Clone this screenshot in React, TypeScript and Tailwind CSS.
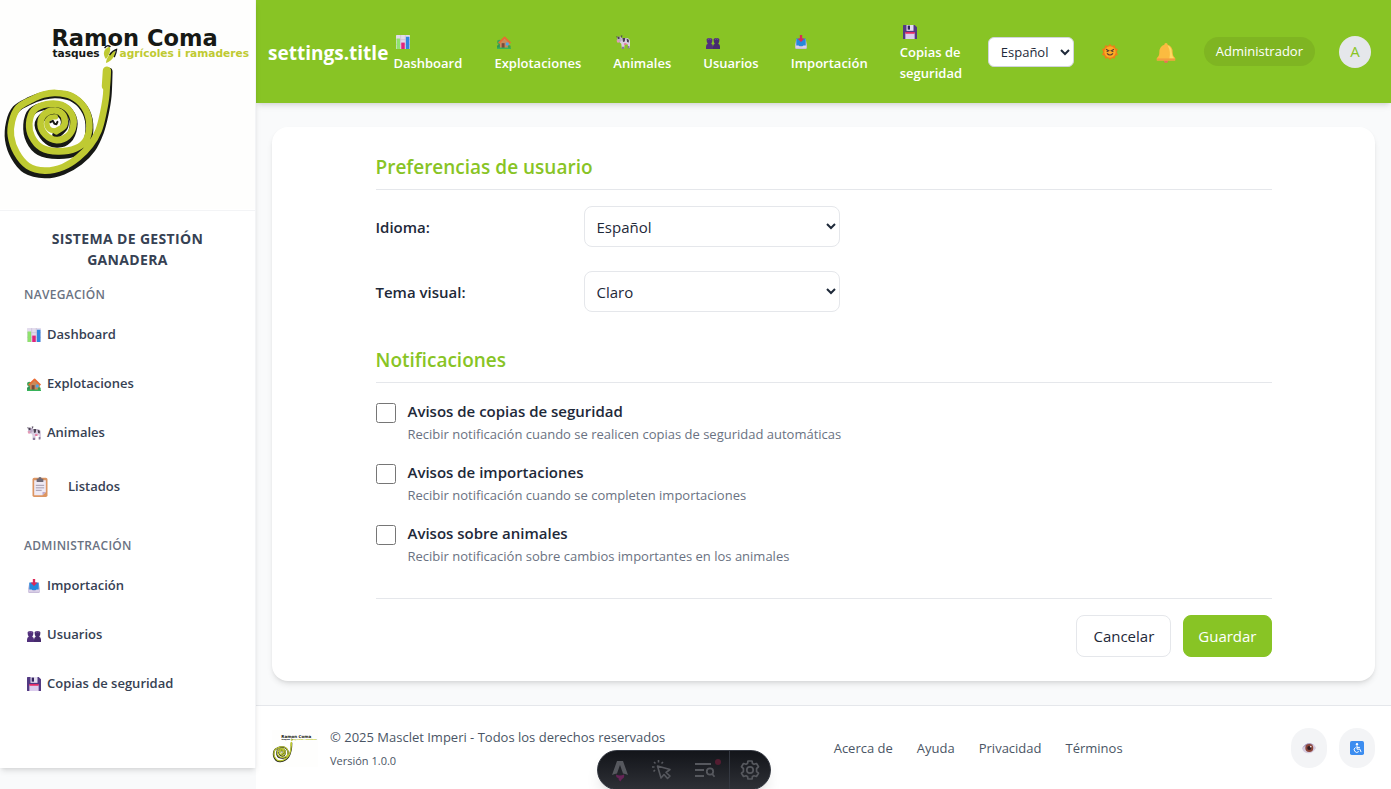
import type { ReactNode } from "react";

type Point = [number, number];

/** Builds a smooth curve through the given points. */
function smooth(points: Point[]): string {
  let d = `M${points[0][0]} ${points[0][1]}`;
  for (let i = 0; i < points.length - 1; i++) {
    const p0 = points[i - 1] ?? points[i];
    const p1 = points[i];
    const p2 = points[i + 1];
    const p3 = points[i + 2] ?? p2;
    d += ` C${p1[0] + (p2[0] - p0[0]) / 6} ${p1[1] + (p2[1] - p0[1]) / 6} ${p2[0] - (p3[0] - p1[0]) / 6} ${p2[1] - (p3[1] - p1[1]) / 6} ${p2[0]} ${p2[1]}`;
  }
  return d;
}

const spiralPoints: Point[] = [
  [323, 212], [320, 285], [311, 340], [297, 393], [272, 437], [235, 475], [190, 503], [135, 514],
  [84, 500], [50, 460], [33, 410], [36, 365], [54, 325], [95, 300], [130, 285], [168, 280],
  [215, 289], [253, 322], [269, 370], [260, 420], [228, 447], [175, 456], [125, 445], [96, 412],
  [88, 372], [102, 332], [140, 314], [185, 316], [215, 342], [221, 378], [204, 410], [170, 422],
  [137, 406], [122, 373], [135, 343], [166, 333], [191, 348], [193, 378], [170, 395],
];
const corePoints: Point[] = [
  [170, 395], [150, 390], [141, 372], [150, 355], [167, 352],
];
const spiral = smooth(spiralPoints);
const core = smooth(corePoints);
// The ink behind the ribbon is heavier on the lower and left sides.
const ink = smooth(
  spiralPoints.map(([x, y], i): Point => [x + (i < 6 ? 4 : x < 130 ? -6 : 0), y + (y > 385 && i > 3 ? 11 : 4)]),
);

function Logo({ className }: { className: string }) {
  return (
    <svg viewBox="0 0 768 630" className={className} role="img" aria-label="Ramon Coma">
      <rect width="768" height="630" fill="#fefefd" />
      <g fill="none" strokeLinecap="round" strokeLinejoin="round">
        <path d={ink} stroke="#171915" strokeWidth="24" />
        <path d={spiral} stroke="#bfca32" strokeWidth="20" />
        <path d="M322 213 L319 260" stroke="#bfca32" strokeWidth="25" />
        <path d={core} stroke="#bfca32" strokeWidth="16" />
        <path d="M152 368 L159 364 L164 373 L170 374 L173 367" stroke="#171915" strokeWidth="6" />
      </g>
      <g fontFamily="DejaVu Sans, sans-serif" fontWeight="700">
        <text x="155" y="138" fontSize="68" fill="#171915">Ramon Coma</text>
        <text x="158" y="172" fontSize="32" fill="#171915">tasques</text>
        <text x="360" y="172" fontSize="32" fill="#bfca32">agrícoles i ramaderes</text>
      </g>
      <path d="M319 178 C308 162 312 147 330 140 C335 150 330 165 319 178Z" fill="#bfca32" />
      <path d="M315 145 Q322 133 333 141" stroke="#171915" strokeWidth="4" fill="none" />
      <path d="M319 190 C320 172 334 158 346 152 C352 160 340 182 319 190Z" fill="#bfca32" />
      <path d="M330 166 Q338 153 351 149 Q350 160 344 172" stroke="#171915" strokeWidth="4" fill="none" />
    </svg>
  );
}

type IconName =
  | "chart" | "house" | "cow" | "tray" | "users" | "floppy"
  | "clipboard" | "sun" | "bell" | "eye" | "access";

const drawings: Record<IconName, ReactNode> = {
  chart: (
    <>
      <rect width="24" height="24" rx="1" fill="#e3dced" />
      <path d="M0 8h24M0 16h24M8 0v24M16 0v24" stroke="#c2b8d3" strokeWidth="1" />
      <rect x="1" y="6" width="6" height="18" fill="#8fe36d" />
      <rect x="9" y="13" width="6" height="11" fill="#e0247c" />
      <rect x="17" y="3" width="6" height="21" fill="#2f86e0" />
    </>
  ),
  house: (
    <>
      <circle cx="4" cy="12" r="4" fill="#3fa65a" />
      <path d="M0 24v-5q4-7 8 0v5z" fill="#2f9556" />
      <path d="M5 12 13 5l9 8v10H5z" fill="#c98a5b" />
      <path d="m3 14 10-10 10 10" stroke="#ea6a32" strokeWidth="3" fill="none" strokeLinejoin="round" />
      <path d="M8 14h5v9H8z" fill="#7a4a3c" />
      <path d="M15 13h5v5h-5z" fill="#4da6e6" />
      <path d="M0 21.500h24V24H0z" fill="#37b35a" />
      <circle cx="21" cy="20" r="2.500" fill="#37a34f" />
    </>
  ),
  cow: (
    <>
      <path d="M7 5h12q5 1 5 6v11h-3l-1-6h-5l-1 7h-4L9 15 6 12z" fill="#d9cfe2" />
      <path d="M2 3h7l1 6-4 4-4-1z" fill="#b9aac6" />
      <path d="M0 2l3 1-1 2zM8 1l3 0-1 4z" fill="#4a4052" />
      <path d="M11 5h5l-1 6-3 1zM18 6l4 2v5l-3-1zM3 3h3v4H3z" fill="#4a4052" />
      <path d="M1 9h5l-1 4H2z" fill="#e59ab5" />
      <path d="M14 14h4v3h-4z" fill="#e8719a" />
      <path d="M10 20h4v4h-4zM20 19h3v4h-3z" fill="#8a7b9b" />
    </>
  ),
  tray: (
    <>
      <path d="M4 7h16l2 9v6q0 2-2 2H4q-2 0-2-2v-6z" fill="#c8bcda" />
      <path d="M4 6h16v13H4z" fill="#2588dc" />
      <path d="M3 18h5q1 3 4 3t4-3h5v4H3z" fill="#ddd3ea" />
      <path d="M10 0h4v6h4l-6 6-6-6h4z" fill="#dd2856" />
    </>
  ),
  users: (
    <g fill="#51307c">
      <path d="M0 24v-4q0-4 3-5-2-3-2-7 0-3 5-3t5 3q0 4-2 7 3 1 3 5v4z" />
      <path d="M12 24v-4q0-4 3-5-2-3-2-7 0-3 5-3t5 3q0 4-2 7 3 1 3 5v4z" fill="#462b6d" />
      <path d="M3 8q3-3 6 0M15 8q3-3 6 0" stroke="#7b559e" strokeWidth="1.500" fill="none" />
    </g>
  ),
  floppy: (
    <>
      <path d="M1 0h19l4 4v20H1q-1 0-1-1V1q0-1 1-1z" fill="#533a83" />
      <path d="M6 0h12v10H6z" fill="#e5dff0" />
      <path d="M8 1h4v7H8z" fill="#32235f" />
      <path d="M4 13h16v11H4z" fill="#dccdee" />
      <path d="M4 12h16v3H4z" fill="#e52c65" />
    </>
  ),
  clipboard: (
    <>
      <rect x="3" y="1" width="18" height="23" rx="2" fill="#dc9562" />
      <path d="M5 4h14v14l-4 4H5z" fill="#eee9f4" />
      <path d="M19 18h-4v4z" fill="#bdaacd" />
      <path d="M8 2h2q0-2 2-2t2 2h2v4H8z" fill="#6f6975" />
      <path d="M7 10h10M7 13h10M7 16h7" stroke="#a49cae" strokeWidth="1.200" />
    </>
  ),
  sun: (
    <>
      <path
        d="m12 0 3 3 4-1 1 4 4 2-2 4 2 4-4 2-1 4-4-1-3 3-3-3-4 1-1-4-4-2 2-4-2-4 4-2 1-4 4 1z"
        fill="#ef7d19"
      />
      <circle cx="12" cy="12" r="8.500" fill="#fbab24" />
      <path d="m6 8 4 2-3 1.500M18 8l-4 2 3 1.500M7.500 14q4.500 5 9 0" stroke="#5b4030" strokeWidth="1.700" fill="none" />
    </>
  ),
  bell: (
    <>
      <circle cx="12" cy="21.500" r="2.500" fill="#e8705a" />
      <path d="M12 0q2 0 2 2 6 2 6 9 0 5 3 7v3H1v-3q3-2 3-7 0-7 6-9 0-2 2-2z" fill="#fbbb40" />
      <path d="M14 3q5 2 5 9 0 4 3 7h-6q2-9-2-16z" fill="#ffda63" />
      <path d="M1 18.500h22V21H1z" fill="#f39b3f" />
    </>
  ),
  eye: (
    <>
      <path d="M0 13Q6 3 14 4q7 1 10 8-5 9-13 9T0 13z" fill="#d6cbdf" />
      <path d="M0 13Q6 3 14 4q4 1 6 3Q8 5 0 13z" fill="#a291b4" />
      <circle cx="12.500" cy="12" r="6.800" fill="#8b4438" />
      <circle cx="12.500" cy="12" r="3.500" fill="#301c22" />
      <circle cx="15" cy="9.500" r="1.500" fill="#e8d9dc" />
    </>
  ),
  access: (
    <>
      <rect width="24" height="24" rx="3" fill="#3c8df0" />
      <circle cx="12" cy="5.500" r="2" fill="#fff" />
      <path d="M12 8v6h5l2 5M12 11h5M9.500 11a4.500 4.500 0 1 0 5.500 7" stroke="#fff" strokeWidth="1.700" fill="none" />
    </>
  ),
};

function Icon({ name, className = "size-3.5" }: { name: IconName; className?: string }) {
  return (
    <svg viewBox="0 0 24 24" className={`shrink-0 ${className}`} aria-hidden="true">
      {drawings[name]}
    </svg>
  );
}

const topLinks: { icon: IconName; label: string }[] = [
  { icon: "chart", label: "Dashboard" },
  { icon: "house", label: "Explotaciones" },
  { icon: "cow", label: "Animales" },
  { icon: "users", label: "Usuarios" },
  { icon: "tray", label: "Importación" },
  { icon: "floppy", label: "Copias de seguridad" },
];

function SideLink({ icon, label }: { icon: IconName; label: string }) {
  return (
    <li>
      <a href="#" className="flex items-center gap-1.5 px-[27px] py-2.5 text-[13px] leading-[21px] font-semibold text-gray-700">
        <Icon name={icon} />
        {label}
      </a>
    </li>
  );
}

function SideHeading({ children }: { children: ReactNode }) {
  return (
    <h3 className="px-6 text-[12px] leading-[18px] font-semibold tracking-wide text-gray-500 uppercase">{children}</h3>
  );
}

function Sidebar() {
  return (
    <aside className="relative z-20 w-64 shrink-0 self-start border-r border-gray-100 bg-white pb-16 shadow-md">
      <div className="border-b border-gray-100 pb-px">
        <Logo className="block w-full" />
      </div>
      <h2 className="px-10 pt-[17px] text-center text-[14px] leading-[21px] font-bold tracking-wide text-gray-700 uppercase">
        Sistema de Gestión Ganadera
      </h2>
      <nav className="pt-4">
        <SideHeading>Navegación</SideHeading>
        <ul className="flex flex-col gap-2 pt-2.5">
          <SideLink icon="chart" label="Dashboard" />
          <SideLink icon="house" label="Explotaciones" />
          <SideLink icon="cow" label="Animales" />
          <li>
            <a href="#" className="flex items-center gap-[18px] px-[30px] py-[15px] text-[13px] leading-[21px] font-semibold text-gray-700">
              <Icon name="clipboard" className="size-5" />
              Listados
            </a>
          </li>
        </ul>
        <div className="pt-[25px]">
          <SideHeading>Administración</SideHeading>
        </div>
        <ul className="flex flex-col gap-2 pt-2.5">
          <SideLink icon="tray" label="Importación" />
          <SideLink icon="users" label="Usuarios" />
          <SideLink icon="floppy" label="Copias de seguridad" />
        </ul>
      </nav>
    </aside>
  );
}

function Header() {
  return (
    <header className="relative z-10 flex items-center bg-[#88c425] pr-5 pl-3 text-white shadow-md">
      <h1 className="mr-[5px] shrink-0 pt-0.5 text-[19px] leading-7 font-bold">settings.title</h1>
      <nav className="flex flex-1 items-center justify-between pt-[21px] pr-6 pb-[19px]">
        {topLinks.map(({ icon, label }) => (
          <a key={label} href="#" className="block max-w-24 text-[13px] leading-[21px] font-semibold last:w-16">
            <span className="flex h-[21px] items-center pl-[3px]">
              <Icon name={icon} />
            </span>
            {label}
          </a>
        ))}
      </nav>
      <div className="flex shrink-0 items-center gap-4">
        <select aria-label="Idioma de la interfaz" className="w-[86px] rounded-md border border-gray-300 bg-white py-1 pl-2 text-[13px] leading-[21px] text-gray-800">
          <option>Español</option>
        </select>
        <button type="button" aria-label="Cambiar tema" className="flex size-10 items-center justify-center">
          <Icon name="sun" className="size-4" />
        </button>
        <button type="button" aria-label="Notificaciones" className="flex size-10 items-center justify-center pt-0.5">
          <Icon name="bell" className="size-5" />
        </button>
        <span className="ml-0.5 rounded-full bg-[#7fb522] px-3 py-1 text-[13px] leading-[21px]">Administrador</span>
        <button type="button" className="ml-2 size-8 rounded-full bg-gray-200 text-[15px] text-[#88c425]">A</button>
      </div>
    </header>
  );
}

function SectionTitle({ children }: { children: ReactNode }) {
  return (
    <h2 className="mb-4 border-b border-gray-200 pb-1.5 text-[19px] leading-8 font-semibold text-[#88c425]">
      {children}
    </h2>
  );
}

function SelectRow({ id, label, value }: { id: string; label: string; value: string }) {
  return (
    <div className="flex items-center gap-4">
      <label htmlFor={id} className="w-48 font-semibold">{label}</label>
      <select id={id} className="h-[41px] w-64 rounded-lg border border-gray-200 bg-white px-2">
        <option>{value}</option>
      </select>
    </div>
  );
}

const notices = [
  { id: "backup", title: "Avisos de copias de seguridad", text: "Recibir notificación cuando se realicen copias de seguridad automáticas" },
  { id: "import", title: "Avisos de importaciones", text: "Recibir notificación cuando se completen importaciones" },
  { id: "animals", title: "Avisos sobre animales", text: "Recibir notificación sobre cambios importantes en los animales" },
];

function Settings() {
  return (
    <section className="rounded-2xl bg-white p-6 shadow-md">
      <form className="mx-auto max-w-4xl text-[15px] leading-6 text-gray-800">
        <SectionTitle>Preferencias de usuario</SectionTitle>
        <div className="mb-8 flex flex-col gap-6">
          <SelectRow id="language" label="Idioma:" value="Español" />
          <SelectRow id="theme" label="Tema visual:" value="Claro" />
        </div>
        <SectionTitle>Notificaciones</SectionTitle>
        <div className="mb-[30px] flex flex-col gap-3.5">
          {notices.map(({ id, title, text }) => (
            <div key={id} className="flex items-start gap-3">
              <input id={id} type="checkbox" className="mt-1 size-5 shrink-0" />
              <div>
                <label htmlFor={id} className="block font-semibold">{title}</label>
                <p className="text-[13px] leading-[23px] text-gray-500">{text}</p>
              </div>
            </div>
          ))}
        </div>
        <div className="flex justify-end gap-3 border-t border-gray-200 pt-4">
          <button type="button" className="rounded-lg border border-gray-200 px-4 py-2">Cancelar</button>
          <button type="submit" className="rounded-lg border border-[#88c425] bg-[#88c425] px-3.5 py-2 text-white">Guardar</button>
        </div>
      </form>
    </section>
  );
}

function Footer() {
  return (
    <footer className="flex grow items-start justify-between border-t border-gray-200 bg-white px-4 pt-[18px] text-[13px] text-gray-600">
      <div className="flex items-center gap-3">
        <Logo className="w-[46px]" />
        <div className="pt-px">
          <p className="leading-6">© 2025 Masclet Imperi - Todos los derechos reservados</p>
          <p className="text-[11px] leading-6">Versión 1.0.0</p>
        </div>
      </div>
      <nav className="flex gap-6 leading-[48px]">
        <a href="#">Acerca de</a>
        <a href="#">Ayuda</a>
        <a href="#">Privacidad</a>
        <a href="#">Términos</a>
      </nav>
      <div className="flex gap-3 pt-1">
        <button type="button" aria-label="Alto contraste" className="flex h-10 w-9 items-center justify-center rounded-full bg-gray-100">
          <Icon name="eye" />
        </button>
        <button type="button" aria-label="Accesibilidad" className="flex h-10 w-9 items-center justify-center rounded-full bg-gray-100">
          <Icon name="access" />
        </button>
      </div>
    </footer>
  );
}

function DevToolbar() {
  return (
    <div className="fixed inset-x-0 -bottom-px z-30 flex justify-center pr-6">
      <div className="flex h-10 overflow-hidden rounded-full border border-[#343841] bg-linear-to-b from-[#13151a] to-[#2e3036] text-[#56585e] shadow-lg">
        <button type="button" aria-label="Menu" className="flex w-11 items-center justify-center">
          <svg viewBox="0 0 20 24" className="h-6 w-5" aria-hidden="true">
            <path d="M7 3h6l5 14q-3-1.500-5-1.500L10 7 7 15.500Q5 15.500 2 17z" fill="currentColor" />
            <path d="M6 16.500q4 2 8 0 1 3-2 4.500-1 1-1.500 2.500Q8 22 8.500 20 6 20 6 16.500z" fill="#652457" />
          </svg>
        </button>
        <button type="button" aria-label="Inspect" className="flex w-10 items-center justify-center">
          <svg viewBox="0 0 20 20" className="size-5" fill="none" stroke="currentColor" strokeWidth="1.600" aria-hidden="true">
            <path d="m5.500 6 3.500 12 3-3.500 3.500 4 2.500-2.500-4-3.500 4-3z" strokeLinejoin="round" />
            <path d="M0 7h2.500M2 2l1.500 1.500M6.500 0v2.500M11 2 9.500 3.500M3 10 1.500 11.500" />
          </svg>
        </button>
        <button type="button" aria-label="Audit" className="relative flex w-12 items-center justify-center border-r border-[#343841]">
          <svg viewBox="0 0 20 16" className="h-4 w-5" fill="none" stroke="currentColor" strokeWidth="1.800" aria-hidden="true">
            <path d="M0 2h16M0 8h9M0 14h9" />
            <circle cx="15" cy="9.500" r="3.200" />
            <path d="m17.200 12 2.300 2.800" />
          </svg>
          <span className="absolute top-2 right-2 size-1.5 rounded-full bg-[#541d31]" />
        </button>
        <button type="button" aria-label="Settings" className="flex w-10 items-center justify-center">
          <svg viewBox="0 0 20 20" className="size-5" fill="none" stroke="currentColor" strokeWidth="1.700" strokeLinejoin="round" aria-hidden="true">
            <path d="M8 1h4l.5 2.500 1.500.8 2.500-.8 2 3.300-1.900 1.700v3l1.900 1.700-2 3.300-2.500-.8-1.500.8L12 19H8l-.5-2.500-1.500-.8-2.500.8-2-3.300 1.900-1.700v-3L1.500 6.800l2-3.300 2.500.8 1.500-.8z" />
            <circle cx="10" cy="10" r="3.200" />
          </svg>
        </button>
      </div>
    </div>
  );
}

export default function App() {
  return (
    <div className="flex min-h-screen bg-gray-50 font-['Open_Sans','Noto_Sans',sans-serif]">
      <Sidebar />
      <div className="flex min-w-0 flex-1 flex-col">
        <Header />
        <main className="px-4 py-6">
          <Settings />
        </main>
        <Footer />
      </div>
      <DevToolbar />
    </div>
  );
}
